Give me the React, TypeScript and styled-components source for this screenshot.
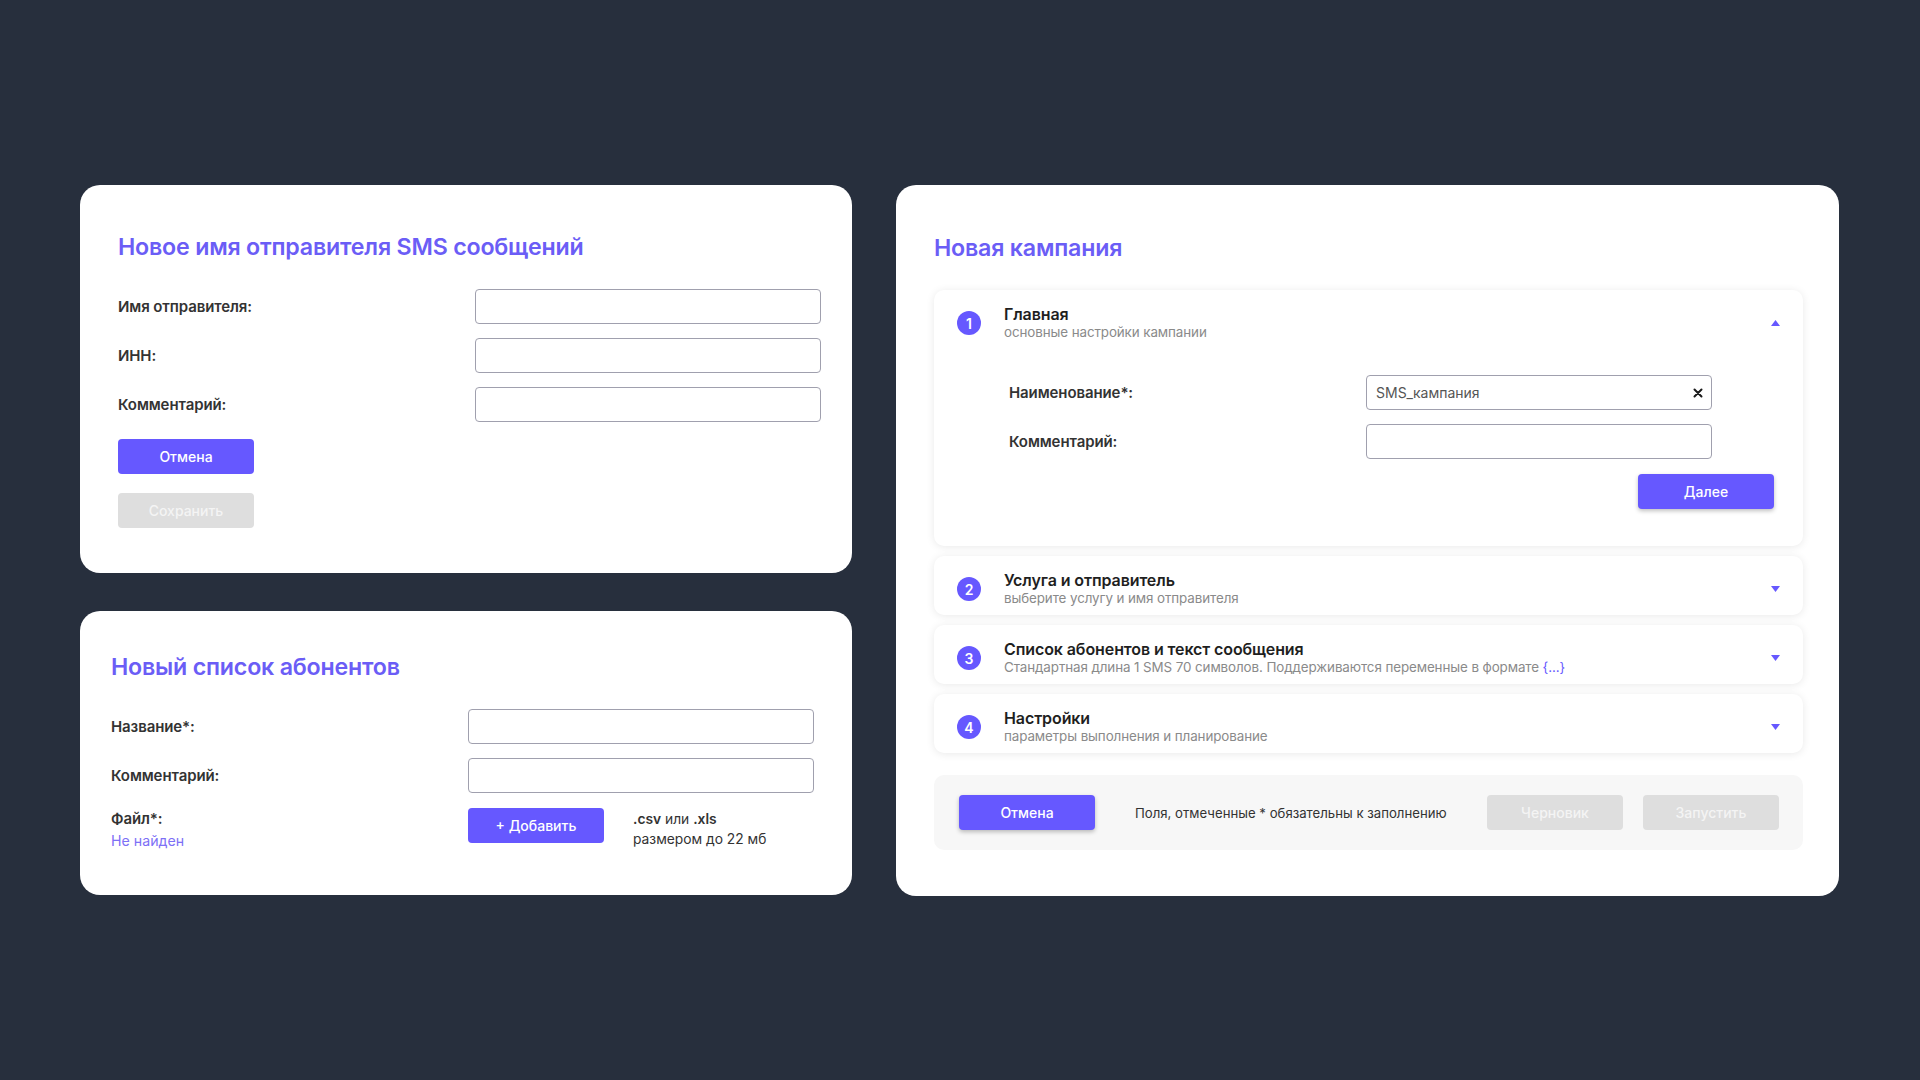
import React from "react";
import styled, { createGlobalStyle } from "styled-components";

const GlobalStyle = createGlobalStyle`
  html, body {
    margin: 0;
    padding: 0;
    background: #272f3d;
  }
  body {
    font-family: Inter, "Noto Sans", Arial, sans-serif;
    color: #2b2b2b;
    -webkit-font-smoothing: antialiased;
  }
  * { box-sizing: border-box; }
`;

const Page = styled.div`
  width: 1920px;
  height: 1080px;
  display: flex;
  align-items: flex-start;
  gap: 44px;
  padding: 185px 0 0 80px;
`;

const LeftColumn = styled.div`
  width: 772px;
  display: flex;
  flex-direction: column;
  gap: 38px;
`;

const Card = styled.section<{ $pad: string; $width?: string }>`
  background: #ffffff;
  border-radius: 20px;
  padding: ${(p) => p.$pad};
  width: ${(p) => p.$width || "auto"};
  display: flex;
  flex-direction: column;
`;

const Title = styled.h1`
  margin: 0;
  font-size: 23.2px;
  line-height: 30px;
  font-weight: 600;
  color: #6b5df6;
  letter-spacing: -0.2px;
`;

const FormGrid = styled.div<{ $top: number }>`
  margin-top: ${(p) => p.$top}px;
  display: grid;
  grid-template-columns: 357px 346px;
  grid-auto-rows: 35px;
  row-gap: 14px;
  align-items: center;
`;

const Label = styled.label`
  font-size: 15px;
  font-weight: 600;
  color: #333;
  letter-spacing: -0.1px;
`;

const InputBox = styled.div`
  height: 35px;
  border: 1px solid #a0a0ae;
  border-radius: 4px;
  background: #fff;
  display: flex;
  align-items: center;
  justify-content: space-between;
  padding: 0 8px 0 9px;
  font-size: 14px;
  color: #555;
`;

const Button = styled.button<{ $variant?: "primary" | "disabled"; $shadow?: boolean }>`
  width: 136px;
  height: 35px;
  border: none;
  border-radius: 4px;
  font-family: inherit;
  font-size: 14px;
  font-weight: 500;
  cursor: pointer;
  color: ${(p) => (p.$variant === "disabled" ? "#f4f4f4" : "#ffffff")};
  background: ${(p) => (p.$variant === "disabled" ? "#dedede" : "#6658ff")};
  box-shadow: ${(p) => (p.$shadow ? "0 2px 4px rgba(0,0,0,0.25)" : "none")};
  flex-shrink: 0;
`;

const ButtonStack = styled.div`
  margin-top: 17px;
  display: flex;
  flex-direction: column;
  gap: 19px;
`;

const FileRow = styled.div`
  margin-top: 15px;
  display: grid;
  grid-template-columns: 357px auto 1fr;
  align-items: start;
`;

const FileLabel = styled.div`
  display: flex;
  flex-direction: column;
  line-height: 22px;
`;

const NotFound = styled.span`
  font-size: 14.2px;
  color: #7d70f6;
`;

const FileHint = styled.div`
  margin-left: 29px;
  padding-top: 1px;
  font-size: 13.8px;
  line-height: 20px;
  color: #333;
  b { font-weight: 600; }
`;

const Accordion = styled.div`
  margin-top: 27px;
  display: flex;
  flex-direction: column;
  gap: 10px;
`;

const Panel = styled.div<{ $open?: boolean }>`
  background: #fff;
  border-radius: 10px;
  box-shadow: 0 1px 8px rgba(0, 0, 0, 0.09);
  padding: ${(p) => (p.$open ? "15px 29px 37px 23px" : "15px 23px 8px 23px")};
`;

const PanelHeader = styled.div<{ $open?: boolean }>`
  display: flex;
  align-items: center;
  gap: 23px;
  margin-right: ${(p) => (p.$open ? "-6px" : "0")};
`;

const StepCircle = styled.div`
  width: 24px;
  height: 24px;
  border-radius: 50%;
  background: #6658ff;
  color: #fff;
  font-size: 14px;
  font-weight: 600;
  display: flex;
  align-items: center;
  justify-content: center;
  flex-shrink: 0;
`;

const HeaderText = styled.div`
  flex: 1;
  display: flex;
  flex-direction: column;
`;

const StepTitle = styled.div`
  font-size: 16px;
  line-height: 18px;
  font-weight: 600;
  color: #1f1f1f;
  letter-spacing: -0.1px;
`;

const StepSub = styled.div`
  font-size: 13.4px;
  line-height: 18px;
  color: #8a8a8a;
  letter-spacing: -0.1px;
  span { color: #6658ff; }
`;

const Chevron = styled.svg`
  width: 9px;
  height: 6px;
  flex-shrink: 0;
`;

const PanelBody = styled.div`
  margin-top: 34px;
  padding-left: 52px;
  display: flex;
  flex-direction: column;
`;

const BodyActions = styled.div`
  margin-top: 15px;
  display: flex;
  justify-content: flex-end;
`;

const Footer = styled.div`
  margin-top: 22px;
  height: 75px;
  background: #f7f7f7;
  border-radius: 10px;
  padding: 0 24px 0 25px;
  display: flex;
  align-items: center;
  gap: 20px;
`;

const FooterNote = styled.div`
  flex: 1;
  margin-left: 20px;
  font-size: 13.2px;
  color: #333;
`;

const ClearIcon = () => (
  <svg width="10" height="10" viewBox="0 0 10 10">
    <path d="M1.5 1.5 L8.5 8.5 M8.5 1.5 L1.5 8.5" stroke="#1a1a1a" strokeWidth="2" strokeLinecap="round" />
  </svg>
);

const Arrow = ({ up }: { up?: boolean }) => (
  <Chevron viewBox="0 0 9 6">
    <path d={up ? "M4.5 0 L9 6 L0 6 Z" : "M0 0 L9 0 L4.5 6 Z"} fill="#6658ff" />
  </Chevron>
);

const steps = [
  { n: 2, title: "Услуга и отправитель", sub: <>выберите услугу и имя отправителя</> },
  {
    n: 3,
    title: "Список абонентов и текст сообщения",
    sub: (
      <>
        Стандартная длина 1 SMS 70 символов. Поддерживаются переменные в формате <span>{"{...}"}</span>
      </>
    ),
  },
  { n: 4, title: "Настройки", sub: <>параметры выполнения и планирование</> },
];

export default function App() {
  return (
    <>
      <GlobalStyle />
      <Page>
        <LeftColumn>
          <Card $pad="47px 30px 45px 38px">
            <Title>Новое имя отправителя SMS сообщений</Title>
            <FormGrid $top={27}>
              <Label>Имя отправителя:</Label>
              <InputBox />
              <Label>ИНН:</Label>
              <InputBox />
              <Label>Комментарий:</Label>
              <InputBox />
            </FormGrid>
            <ButtonStack>
              <Button $variant="primary">Отмена</Button>
              <Button $variant="disabled">Сохранить</Button>
            </ButtonStack>
          </Card>
          <Card $pad="41px 38px 43px 31px">
            <Title>Новый список абонентов</Title>
            <FormGrid $top={27}>
              <Label>Название*:</Label>
              <InputBox />
              <Label>Комментарий:</Label>
              <InputBox />
            </FormGrid>
            <FileRow>
              <FileLabel>
                <Label>Файл*:</Label>
                <NotFound>Не найден</NotFound>
              </FileLabel>
              <Button $variant="primary">+ Добавить</Button>
              <FileHint>
                <b>.csv</b> или <b>.xls</b>
                <br />
                размером до 22 мб
              </FileHint>
            </FileRow>
          </Card>
        </LeftColumn>

        <Card $pad="48px 36px 46px 38px" $width="943px">
          <Title>Новая кампания</Title>
          <Accordion>
            <Panel $open>
              <PanelHeader $open>
                <StepCircle>1</StepCircle>
                <HeaderText>
                  <StepTitle>Главная</StepTitle>
                  <StepSub>основные настройки кампании</StepSub>
                </HeaderText>
                <Arrow up />
              </PanelHeader>
              <PanelBody>
                <FormGrid $top={0}>
                  <Label>Наименование*:</Label>
                  <InputBox>
                    SMS_кампания
                    <ClearIcon />
                  </InputBox>
                  <Label>Комментарий:</Label>
                  <InputBox />
                </FormGrid>
                <BodyActions>
                  <Button $variant="primary" $shadow>
                    Далее
                  </Button>
                </BodyActions>
              </PanelBody>
            </Panel>
            {steps.map((s) => (
              <Panel key={s.n}>
                <PanelHeader>
                  <StepCircle>{s.n}</StepCircle>
                  <HeaderText>
                    <StepTitle>{s.title}</StepTitle>
                    <StepSub>{s.sub}</StepSub>
                  </HeaderText>
                  <Arrow />
                </PanelHeader>
              </Panel>
            ))}
          </Accordion>
          <Footer>
            <Button $variant="primary" $shadow>
              Отмена
            </Button>
            <FooterNote>Поля, отмеченные * обязательны к заполнению</FooterNote>
            <Button $variant="disabled">Черновик</Button>
            <Button $variant="disabled">Запустить</Button>
          </Footer>
        </Card>
      </Page>
    </>
  );
}
